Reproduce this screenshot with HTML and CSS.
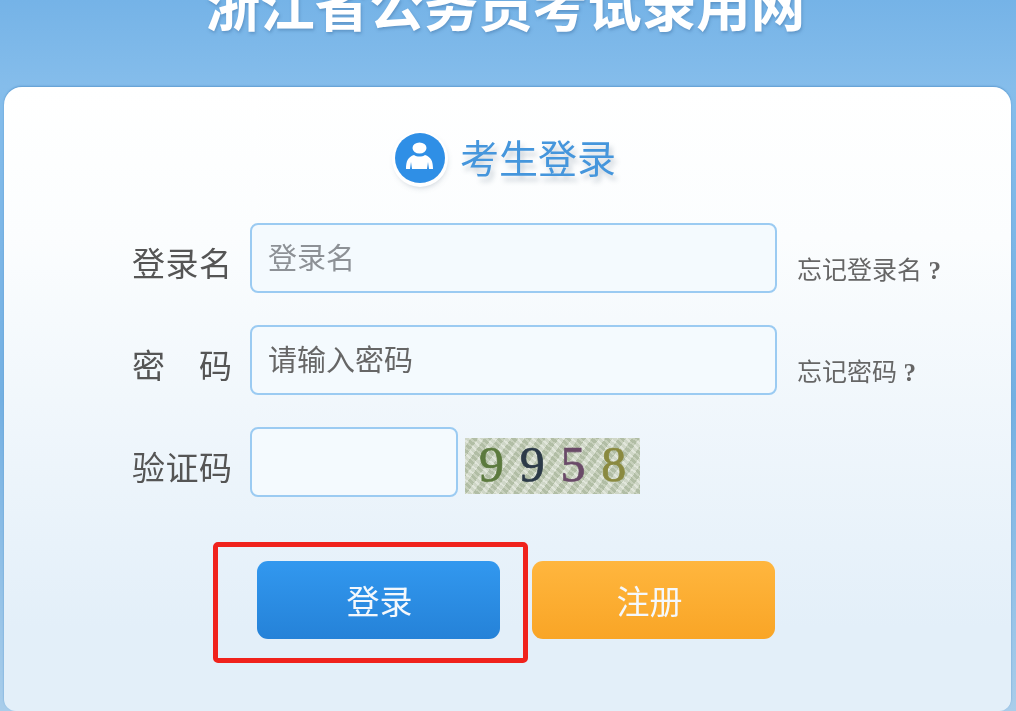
FILE: index.html
```html
<!DOCTYPE html>
<html lang="zh-CN">
<head>
    <meta charset="UTF-8">
    <meta name="viewport" content="width=device-width, initial-scale=1.0">
    <title>浙江省公务员考试录用网</title>
    <link rel="stylesheet" href="styles.css">
</head>
<body>

<div class="page">
    <header class="site-header">
        <h1>浙江省公务员考试录用网</h1>
    </header>

    <div class="card">
        <div class="card-title">
            <span class="user-icon">
                <svg viewBox="0 0 50 50" width="50" height="50">
                    <circle cx="25" cy="25" r="25" fill="#2f8fe6"/>
                    <ellipse cx="24.5" cy="15" rx="7" ry="5.5" fill="#fff"/>
                    <path d="M11 36C11 28 13 24 19 22C22 24 27 24 30 22C36 24 38 28 38 36L34 36L33 29L32 36L17 36L16 29L15 36Z" fill="#fff"/>
                </svg>
            </span>
            <h2>考生登录</h2>
        </div>

        <form class="login-form">
            <div class="row">
                <label class="row-label" for="username">登录名</label>
                <input class="field" type="text" id="username" placeholder="登录名">
                <a class="forgot" href="#">忘记登录名 <span class="qmark">?</span></a>
            </div>
            <div class="row">
                <label class="row-label" for="password">密 码</label>
                <input class="field field-dark" type="password" id="password" placeholder="请输入密码">
                <a class="forgot" href="#">忘记密码 <span class="qmark">?</span></a>
            </div>
            <div class="row">
                <label class="row-label" for="code">验证码</label>
                <input class="field field-short" type="text" id="code">
                <div class="captcha">
                    <span class="digit-green">9</span>
                    <span class="digit-dark">9</span>
                    <span class="digit-purple">5</span>
                    <span class="digit-olive">8</span>
                </div>
            </div>

            <div class="actions">
                <div class="highlight">
                    <button class="btn btn-login" type="button">登录</button>
                </div>
                <button class="btn btn-register" type="button">注册</button>
            </div>
        </form>
    </div>
</div>

</body>
</html>
```

FILE: styles.css
```css
html, body {
    margin: 0;
    height: 711px;
    overflow: hidden;
    background-color: #80b9ea;
}
.page {
    height: 711px;
    font-family: "Noto Sans CJK SC", "Liberation Sans", sans-serif;
    background: linear-gradient(#75b3e7, #85bdeb 87px, #74b0e2 400px, #a9cdea 711px);
    filter: blur(0.7px);
}
.site-header {
    height: 87px;
    display: flex;
    justify-content: center;
    align-items: flex-end;
}
.site-header h1 {
    margin: 0 5px 57px 0;
    font-size: 54.5px;
    line-height: 54px;
    font-weight: 700;
    color: #fff;
    white-space: nowrap;
    text-shadow: 1px 2px 3px rgba(70, 120, 170, 0.5);
}
.card {
    margin: 0 5px 0 4px;
    height: 624px;
    box-sizing: border-box;
    padding-top: 46px;
    border-radius: 18px 18px 12px 12px;
    background: linear-gradient(#fff, #fbfdfe 150px, #e3eff9 540px);
    box-shadow: 0 -1px 2px #5f9bd0;
}
.card-title {
    display: flex;
    justify-content: center;
    align-items: center;
    gap: 15px;
    height: 50px;
    padding-right: 4px;
}
.card-title h2 {
    margin: -4px 0 0;
    font-size: 39px;
    font-weight: 400;
    color: #4596dc;
    text-shadow: 3px 5px 5px rgba(90, 110, 130, 0.3);
}
.user-icon {
    width: 50px;
    height: 50px;
    border-radius: 50%;
    box-shadow: 0 1px 0 3px #fff, 1px 4px 6px rgba(80, 100, 120, 0.35);
}
.user-icon svg {
    display: block;
}
.login-form {
    margin-top: 40px;
    padding-left: 128px;
}
.row {
    display: flex;
    align-items: center;
    height: 70px;
    margin-bottom: 32px;
}
.row-label {
    width: 100px;
    margin-right: 18px;
    margin-top: 8px;
    font-size: 33px;
    line-height: 40px;
    color: #555;
    text-align-last: justify;
}
.field {
    width: 527px;
    height: 70px;
    box-sizing: border-box;
    padding: 0 16px 4px 16px;
    border: 2px solid #9bcbf2;
    border-radius: 8px;
    background-color: #f4fafe;
    font-family: inherit;
    font-size: 29px;
    outline: none;
}
.field::placeholder {
    color: #8d9196;
    opacity: 1;
}
.field-dark::placeholder {
    color: #666;
}
.field-short {
    width: 208px;
}
.forgot {
    margin-left: 20px;
    margin-top: 22px;
    font-size: 25px;
    line-height: 30px;
    color: #666;
    text-decoration: none;
    white-space: nowrap;
}
.qmark {
    font-family: "Liberation Serif", serif;
    font-weight: 700;
    margin-left: 1px;
}
.captcha {
    width: 175px;
    height: 56px;
    margin-left: 7px;
    margin-top: 7px;
    display: flex;
    justify-content: space-around;
    align-items: center;
    box-sizing: border-box;
    padding: 0 6px 4px;
    font-family: "Liberation Serif", serif;
    font-size: 50px;
    line-height: 50px;
    -webkit-text-stroke: 0.7px;
    background-color: #cdd6c2;
    background-image:
        repeating-linear-gradient(125deg, rgba(255, 255, 255, 0.28) 0 5px, rgba(120, 140, 100, 0.16) 5px 11px),
        repeating-linear-gradient(40deg, rgba(255, 255, 255, 0.18) 0 2px, rgba(100, 120, 90, 0.16) 2px 5px);
}
.digit-green { color: #5c7a3e; }
.digit-dark { color: #2c3a48; }
.digit-purple { color: #6a4a68; }
.digit-olive { color: #8a8a40; }
.actions {
    display: flex;
    align-items: flex-start;
    margin-top: 45px;
    padding-left: 81px;
}
.highlight {
    padding: 14px 23px 19px 39px;
    border: 5px solid #f0221c;
    border-radius: 5px;
}
.btn {
    width: 243px;
    height: 78px;
    border: none;
    border-radius: 11px;
    font-family: inherit;
    font-size: 33px;
    color: #f4f8fc;
    cursor: pointer;
}
.btn-login {
    display: block;
    padding-left: 8px;
    background: linear-gradient(#3298ef, #2582d8);
}
.btn-register {
    margin: 19px 0 0 4px;
    padding-right: 14px;
    background: linear-gradient(#ffb63e, #f9a526);
}
```
